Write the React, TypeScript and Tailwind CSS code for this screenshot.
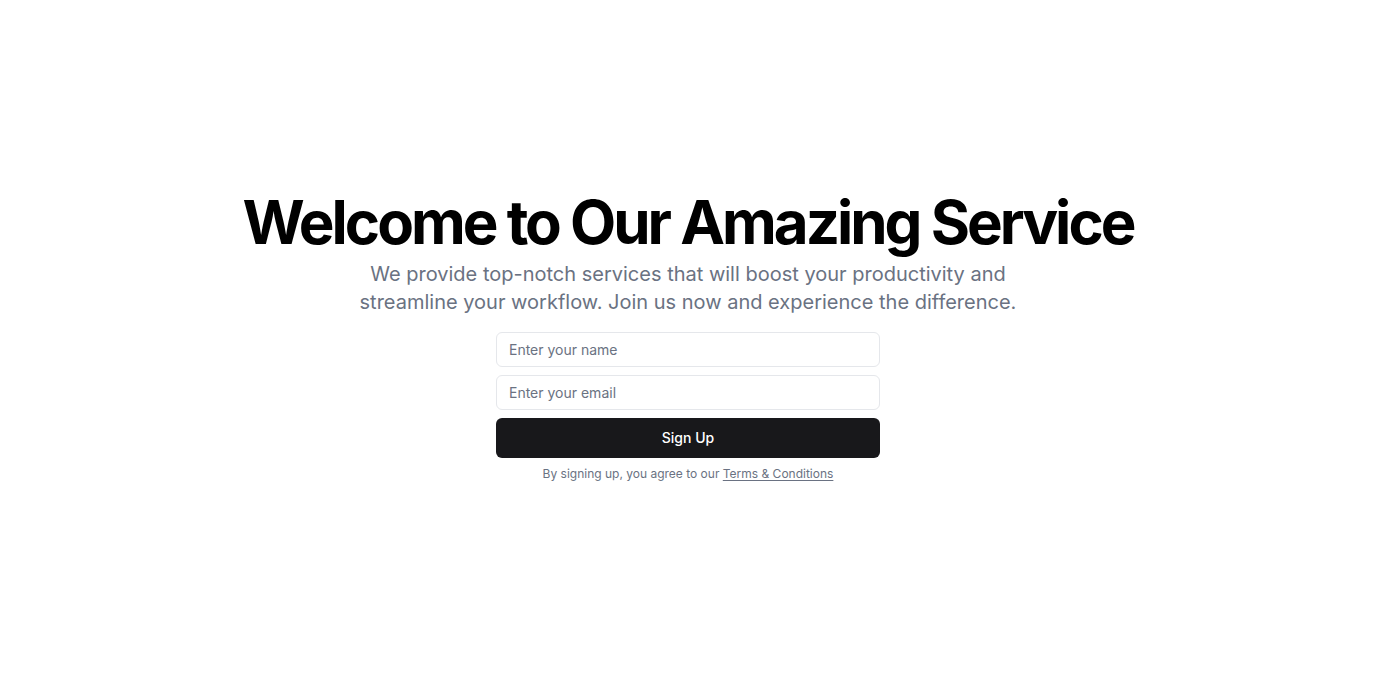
export default function App() {
  return (
    <main className="min-h-screen w-full flex items-center justify-center bg-white font-['Inter',sans-serif]">
      <div className="flex flex-col items-center text-center px-4">
        <h1 className="text-6xl font-bold tracking-tighter leading-none text-black">
          Welcome to Our Amazing Service
        </h1>
        <p className="mt-2 max-w-[700px] text-xl leading-7 text-gray-500">
          We provide top-notch services that will boost your productivity and streamline your workflow. Join us now and
          experience the difference.
        </p>
        <form className="mt-4 w-full max-w-sm flex flex-col gap-2" onSubmit={(e) => e.preventDefault()}>
          <input
            type="text"
            placeholder="Enter your name"
            className="h-[35px] w-full rounded-md border border-gray-200 bg-white px-3 text-sm text-gray-900 placeholder:text-gray-500 outline-none"
          />
          <input
            type="email"
            placeholder="Enter your email"
            className="h-[35px] w-full rounded-md border border-gray-200 bg-white px-3 text-sm text-gray-900 placeholder:text-gray-500 outline-none"
          />
          <button type="submit" className="h-10 w-full rounded-md bg-zinc-900 text-sm font-medium text-white">
            Sign Up
          </button>
        </form>
        <p className="mt-2 text-xs leading-4 text-gray-500">
          By signing up, you agree to our{" "}
          <a href="#" className="underline underline-offset-2">
            Terms &amp; Conditions
          </a>
        </p>
      </div>
    </main>
  );
}
